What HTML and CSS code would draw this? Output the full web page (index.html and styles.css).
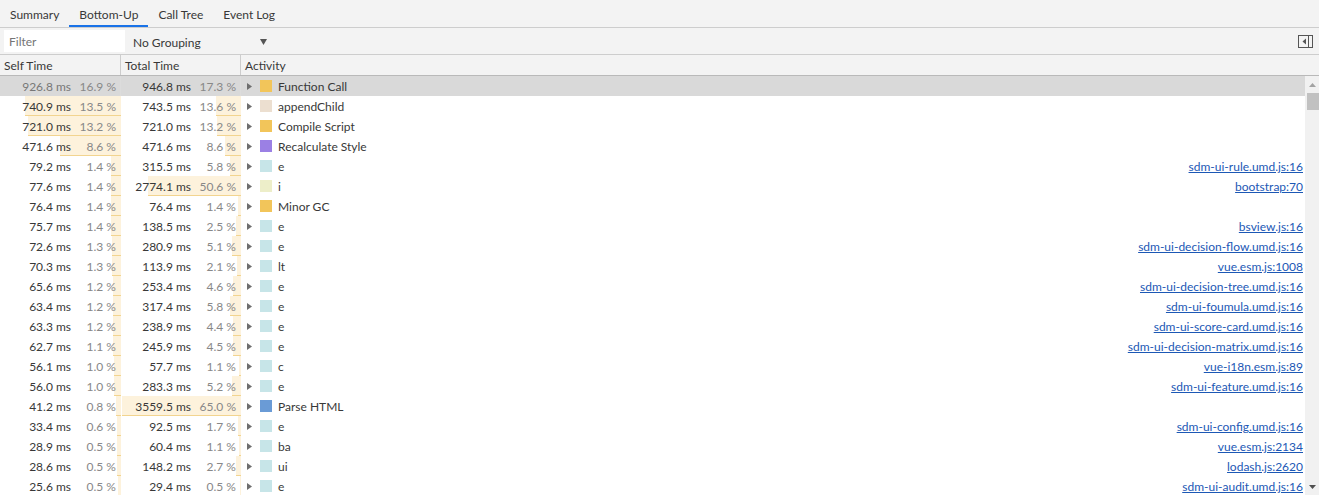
FILE: index.html
```html
<!DOCTYPE html>
<html>
<head>
<meta charset="utf-8">
<title>Bottom-Up</title>
<link rel="stylesheet" href="styles.css">
</head>
<body>
<div class="panel">
  <div class="tabs">
    <div class="tab">Summary</div>
    <div class="tab active">Bottom-Up</div>
    <div class="tab">Call Tree</div>
    <div class="tab">Event Log</div>
  </div>
  <div class="toolbar">
    <div class="filter">Filter</div>
    <div class="grouping">
      <span>No Grouping</span>
      <svg class="dd" width="7" height="6" viewBox="0 0 7 6"><polygon points="0,0 7,0 3.5,6" fill="#555"/></svg>
    </div>
    <div class="spacer"></div>
    <svg class="toggle" width="15" height="13" viewBox="0 0 15 13"><rect x="0.5" y="0.5" width="14" height="12" fill="none" stroke="#555"/><line x1="10.5" y1="0.5" x2="10.5" y2="12.5" stroke="#555"/><polygon points="8,3.5 4.5,6.5 8,9.5" fill="#555"/></svg>
  </div>
  <div class="grid-head">
    <div class="hcell">Self Time</div>
    <div class="hcell">Total Time</div>
    <div class="hcell last">Activity</div>
  </div>
  <div class="grid-body">
    <div class="rows">
      <div class="row selected">
        <div class="cell num dim"><div class="bar" style="width:100%"></div><span class="ms">926.8 ms</span><span class="pct">16.9 %</span></div>
        <div class="cell num"><div class="bar" style="width:26.6%"></div><span class="ms">946.8 ms</span><span class="pct">17.3 %</span></div>
        <div class="cell act"><svg class="exp" width="5" height="7" viewBox="0 0 5 7"><polygon points="0,0 5,3.5 0,7"/></svg><span class="sw c-script"></span><span class="name">Function Call</span></div>
      </div>
      <div class="row">
        <div class="cell num"><div class="bar" style="width:79.94%"></div><span class="ms">740.9 ms</span><span class="pct">13.5 %</span></div>
        <div class="cell num"><div class="bar" style="width:20.89%"></div><span class="ms">743.5 ms</span><span class="pct">13.6 %</span></div>
        <div class="cell act"><svg class="exp" width="5" height="7" viewBox="0 0 5 7"><polygon points="0,0 5,3.5 0,7"/></svg><span class="sw c-native"></span><span class="name">appendChild</span></div>
      </div>
      <div class="row">
        <div class="cell num"><div class="bar" style="width:77.79%"></div><span class="ms">721.0 ms</span><span class="pct">13.2 %</span></div>
        <div class="cell num"><div class="bar" style="width:20.26%"></div><span class="ms">721.0 ms</span><span class="pct">13.2 %</span></div>
        <div class="cell act"><svg class="exp" width="5" height="7" viewBox="0 0 5 7"><polygon points="0,0 5,3.5 0,7"/></svg><span class="sw c-script"></span><span class="name">Compile Script</span></div>
      </div>
      <div class="row">
        <div class="cell num"><div class="bar" style="width:50.88%"></div><span class="ms">471.6 ms</span><span class="pct">8.6 %</span></div>
        <div class="cell num"><div class="bar" style="width:13.25%"></div><span class="ms">471.6 ms</span><span class="pct">8.6 %</span></div>
        <div class="cell act"><svg class="exp" width="5" height="7" viewBox="0 0 5 7"><polygon points="0,0 5,3.5 0,7"/></svg><span class="sw c-render"></span><span class="name">Recalculate Style</span></div>
      </div>
      <div class="row">
        <div class="cell num"><div class="bar" style="width:8.55%"></div><span class="ms">79.2 ms</span><span class="pct">1.4 %</span></div>
        <div class="cell num"><div class="bar" style="width:8.86%"></div><span class="ms">315.5 ms</span><span class="pct">5.8 %</span></div>
        <div class="cell act"><svg class="exp" width="5" height="7" viewBox="0 0 5 7"><polygon points="0,0 5,3.5 0,7"/></svg><span class="sw c-fn"></span><span class="name">e</span><a class="link">sdm-ui-rule.umd.js:16</a></div>
      </div>
      <div class="row">
        <div class="cell num"><div class="bar" style="width:8.37%"></div><span class="ms">77.6 ms</span><span class="pct">1.4 %</span></div>
        <div class="cell num"><div class="bar" style="width:77.93%"></div><span class="ms">2774.1 ms</span><span class="pct">50.6 %</span></div>
        <div class="cell act"><svg class="exp" width="5" height="7" viewBox="0 0 5 7"><polygon points="0,0 5,3.5 0,7"/></svg><span class="sw c-fn2"></span><span class="name">i</span><a class="link">bootstrap:70</a></div>
      </div>
      <div class="row">
        <div class="cell num"><div class="bar" style="width:8.24%"></div><span class="ms">76.4 ms</span><span class="pct">1.4 %</span></div>
        <div class="cell num"><div class="bar" style="width:2.15%"></div><span class="ms">76.4 ms</span><span class="pct">1.4 %</span></div>
        <div class="cell act"><svg class="exp" width="5" height="7" viewBox="0 0 5 7"><polygon points="0,0 5,3.5 0,7"/></svg><span class="sw c-script"></span><span class="name">Minor GC</span></div>
      </div>
      <div class="row">
        <div class="cell num"><div class="bar" style="width:8.17%"></div><span class="ms">75.7 ms</span><span class="pct">1.4 %</span></div>
        <div class="cell num"><div class="bar" style="width:3.89%"></div><span class="ms">138.5 ms</span><span class="pct">2.5 %</span></div>
        <div class="cell act"><svg class="exp" width="5" height="7" viewBox="0 0 5 7"><polygon points="0,0 5,3.5 0,7"/></svg><span class="sw c-fn"></span><span class="name">e</span><a class="link">bsview.js:16</a></div>
      </div>
      <div class="row">
        <div class="cell num"><div class="bar" style="width:7.83%"></div><span class="ms">72.6 ms</span><span class="pct">1.3 %</span></div>
        <div class="cell num"><div class="bar" style="width:7.89%"></div><span class="ms">280.9 ms</span><span class="pct">5.1 %</span></div>
        <div class="cell act"><svg class="exp" width="5" height="7" viewBox="0 0 5 7"><polygon points="0,0 5,3.5 0,7"/></svg><span class="sw c-fn"></span><span class="name">e</span><a class="link">sdm-ui-decision-flow.umd.js:16</a></div>
      </div>
      <div class="row">
        <div class="cell num"><div class="bar" style="width:7.59%"></div><span class="ms">70.3 ms</span><span class="pct">1.3 %</span></div>
        <div class="cell num"><div class="bar" style="width:3.2%"></div><span class="ms">113.9 ms</span><span class="pct">2.1 %</span></div>
        <div class="cell act"><svg class="exp" width="5" height="7" viewBox="0 0 5 7"><polygon points="0,0 5,3.5 0,7"/></svg><span class="sw c-fn"></span><span class="name">lt</span><a class="link">vue.esm.js:1008</a></div>
      </div>
      <div class="row">
        <div class="cell num"><div class="bar" style="width:7.08%"></div><span class="ms">65.6 ms</span><span class="pct">1.2 %</span></div>
        <div class="cell num"><div class="bar" style="width:7.12%"></div><span class="ms">253.4 ms</span><span class="pct">4.6 %</span></div>
        <div class="cell act"><svg class="exp" width="5" height="7" viewBox="0 0 5 7"><polygon points="0,0 5,3.5 0,7"/></svg><span class="sw c-fn"></span><span class="name">e</span><a class="link">sdm-ui-decision-tree.umd.js:16</a></div>
      </div>
      <div class="row">
        <div class="cell num"><div class="bar" style="width:6.84%"></div><span class="ms">63.4 ms</span><span class="pct">1.2 %</span></div>
        <div class="cell num"><div class="bar" style="width:8.92%"></div><span class="ms">317.4 ms</span><span class="pct">5.8 %</span></div>
        <div class="cell act"><svg class="exp" width="5" height="7" viewBox="0 0 5 7"><polygon points="0,0 5,3.5 0,7"/></svg><span class="sw c-fn"></span><span class="name">e</span><a class="link">sdm-ui-foumula.umd.js:16</a></div>
      </div>
      <div class="row">
        <div class="cell num"><div class="bar" style="width:6.83%"></div><span class="ms">63.3 ms</span><span class="pct">1.2 %</span></div>
        <div class="cell num"><div class="bar" style="width:6.71%"></div><span class="ms">238.9 ms</span><span class="pct">4.4 %</span></div>
        <div class="cell act"><svg class="exp" width="5" height="7" viewBox="0 0 5 7"><polygon points="0,0 5,3.5 0,7"/></svg><span class="sw c-fn"></span><span class="name">e</span><a class="link">sdm-ui-score-card.umd.js:16</a></div>
      </div>
      <div class="row">
        <div class="cell num"><div class="bar" style="width:6.77%"></div><span class="ms">62.7 ms</span><span class="pct">1.1 %</span></div>
        <div class="cell num"><div class="bar" style="width:6.91%"></div><span class="ms">245.9 ms</span><span class="pct">4.5 %</span></div>
        <div class="cell act"><svg class="exp" width="5" height="7" viewBox="0 0 5 7"><polygon points="0,0 5,3.5 0,7"/></svg><span class="sw c-fn"></span><span class="name">e</span><a class="link">sdm-ui-decision-matrix.umd.js:16</a></div>
      </div>
      <div class="row">
        <div class="cell num"><div class="bar" style="width:6.05%"></div><span class="ms">56.1 ms</span><span class="pct">1.0 %</span></div>
        <div class="cell num"><div class="bar" style="width:1.62%"></div><span class="ms">57.7 ms</span><span class="pct">1.1 %</span></div>
        <div class="cell act"><svg class="exp" width="5" height="7" viewBox="0 0 5 7"><polygon points="0,0 5,3.5 0,7"/></svg><span class="sw c-fn"></span><span class="name">c</span><a class="link">vue-i18n.esm.js:89</a></div>
      </div>
      <div class="row">
        <div class="cell num"><div class="bar" style="width:6.04%"></div><span class="ms">56.0 ms</span><span class="pct">1.0 %</span></div>
        <div class="cell num"><div class="bar" style="width:7.96%"></div><span class="ms">283.3 ms</span><span class="pct">5.2 %</span></div>
        <div class="cell act"><svg class="exp" width="5" height="7" viewBox="0 0 5 7"><polygon points="0,0 5,3.5 0,7"/></svg><span class="sw c-fn"></span><span class="name">e</span><a class="link">sdm-ui-feature.umd.js:16</a></div>
      </div>
      <div class="row">
        <div class="cell num"><div class="bar" style="width:4.45%"></div><span class="ms">41.2 ms</span><span class="pct">0.8 %</span></div>
        <div class="cell num"><div class="bar" style="width:100%"></div><span class="ms">3559.5 ms</span><span class="pct">65.0 %</span></div>
        <div class="cell act"><svg class="exp" width="5" height="7" viewBox="0 0 5 7"><polygon points="0,0 5,3.5 0,7"/></svg><span class="sw c-load"></span><span class="name">Parse HTML</span></div>
      </div>
      <div class="row">
        <div class="cell num"><div class="bar" style="width:3.6%"></div><span class="ms">33.4 ms</span><span class="pct">0.6 %</span></div>
        <div class="cell num"><div class="bar" style="width:2.6%"></div><span class="ms">92.5 ms</span><span class="pct">1.7 %</span></div>
        <div class="cell act"><svg class="exp" width="5" height="7" viewBox="0 0 5 7"><polygon points="0,0 5,3.5 0,7"/></svg><span class="sw c-fn"></span><span class="name">e</span><a class="link">sdm-ui-config.umd.js:16</a></div>
      </div>
      <div class="row">
        <div class="cell num"><div class="bar" style="width:3.12%"></div><span class="ms">28.9 ms</span><span class="pct">0.5 %</span></div>
        <div class="cell num"><div class="bar" style="width:1.7%"></div><span class="ms">60.4 ms</span><span class="pct">1.1 %</span></div>
        <div class="cell act"><svg class="exp" width="5" height="7" viewBox="0 0 5 7"><polygon points="0,0 5,3.5 0,7"/></svg><span class="sw c-fn"></span><span class="name">ba</span><a class="link">vue.esm.js:2134</a></div>
      </div>
      <div class="row">
        <div class="cell num"><div class="bar" style="width:3.09%"></div><span class="ms">28.6 ms</span><span class="pct">0.5 %</span></div>
        <div class="cell num"><div class="bar" style="width:4.16%"></div><span class="ms">148.2 ms</span><span class="pct">2.7 %</span></div>
        <div class="cell act"><svg class="exp" width="5" height="7" viewBox="0 0 5 7"><polygon points="0,0 5,3.5 0,7"/></svg><span class="sw c-fn"></span><span class="name">ui</span><a class="link">lodash.js:2620</a></div>
      </div>
      <div class="row">
        <div class="cell num"><div class="bar" style="width:2.76%"></div><span class="ms">25.6 ms</span><span class="pct">0.5 %</span></div>
        <div class="cell num"><div class="bar" style="width:0.83%"></div><span class="ms">29.4 ms</span><span class="pct">0.5 %</span></div>
        <div class="cell act"><svg class="exp" width="5" height="7" viewBox="0 0 5 7"><polygon points="0,0 5,3.5 0,7"/></svg><span class="sw c-fn"></span><span class="name">e</span><a class="link">sdm-ui-audit.umd.js:16</a></div>
      </div>
    </div>
    <div class="scrollbar">
      <div class="sb-btn"><svg width="7" height="4" viewBox="0 0 7 4"><polygon points="0,4 7,4 3.5,0" fill="#a3a3a3"/></svg></div>
      <div class="sb-thumb"></div>
      <div class="sb-track"></div>
      <div class="sb-btn"><svg width="7" height="4" viewBox="0 0 7 4"><polygon points="0,0 7,0 3.5,4" fill="#505050"/></svg></div>
    </div>
  </div>
</div>
</body>
</html>
```

FILE: styles.css
```css
* { box-sizing: border-box; }
html, body { margin: 0; padding: 0; }
body {
  font-family: Lato, "Liberation Sans", sans-serif;
  font-size: 12px;
  color: #383838;
  background: #fff;
}
.panel {
  height: 495px;
  display: flex;
  flex-direction: column;
  overflow: hidden;
}
.tabs {
  display: flex;
  height: 28px;
  background: #f3f3f3;
  border-bottom: 1px solid #cdcdcd;
}
.tab {
  position: relative;
  display: flex;
  align-items: center;
  padding: 1px 10px 0;
  height: 27px;
  color: #383838;
}
.tab.active::after {
  content: "";
  position: absolute;
  left: 0;
  right: 0;
  bottom: 0;
  height: 2px;
  background: #1a73e8;
}
.toolbar {
  display: flex;
  align-items: center;
  height: 27px;
  background: #f3f3f3;
  border-bottom: 1px solid #cdcdcd;
  padding: 0 6px 0 4px;
}
.filter {
  width: 121px;
  height: 22px;
  background: #fff;
  color: #757575;
  padding: 2px 0 0 5px;
  line-height: 20px;
}
.grouping {
  display: flex;
  align-items: center;
  width: 134px;
  margin-left: 8px;
  padding-top: 2px;
  color: #383838;
}
.grouping .dd { margin-left: auto; margin-top: -1px; }
.spacer { flex: 1; }
.toggle { display: block; margin-right: 0; }
.grid-head {
  display: grid;
  grid-template-columns: 121px 120px 1fr;
  height: 21px;
  background: #f3f3f3;
  border-bottom: 1px solid #b9b9b9;
}
.hcell {
  padding: 2px 4px 0;
  line-height: 18px;
  border-right: 1px solid #cdcdcd;
  color: #383838;
}
.hcell.last { border-right: none; }
.grid-body {
  flex: 1;
  display: flex;
  min-height: 0;
}
.rows {
  flex: 1;
  overflow: hidden;
}
.row {
  display: grid;
  grid-template-columns: 121px 120px 1fr;
  height: 20px;
}
.row.selected { background: #d9d9d9; }
.cell {
  height: 20px;
  white-space: nowrap;
}
.num {
  position: relative;
  display: flex;
  justify-content: flex-end;
  padding: 2px 4px 0 0;
  line-height: 18px;
  border-right: 1px solid #dcdcdc;
}
.bar {
  position: absolute;
  right: -1px;
  top: 0;
  bottom: 0;
  background: #fdf2dc;
  border-bottom: 1px solid #f2d48f;
}
.row.selected .bar { background: transparent; border-bottom-color: transparent; }
.ms, .pct { position: relative; }
.pct {
  width: 45px;
  text-align: right;
  color: #888;
}
.dim .ms { color: #777; }
.act {
  display: flex;
  align-items: center;
  padding: 0 2px 0 6px;
}
.exp { fill: #6e6e6e; flex: none; }
.sw {
  width: 12px;
  height: 12px;
  margin-left: 8px;
  flex: none;
}
.c-script { background: #f2c55a; }
.c-native { background: #ecdfd0; }
.c-render { background: #9b80e4; }
.c-fn { background: #c7e5e8; }
.c-fn2 { background: #edeec9; }
.c-load { background: #6a9bd6; }
.name {
  margin-left: 6px;
  padding-top: 2px;
  line-height: 18px;
  color: #383838;
}
.link {
  margin-left: auto;
  padding-top: 2px;
  line-height: 18px;
  color: #1c58b5;
  text-decoration: underline;
  cursor: pointer;
}
.scrollbar {
  width: 14px;
  background: #f1f1f1;
  display: flex;
  flex-direction: column;
}
.sb-btn {
  height: 17px;
  display: flex;
  align-items: center;
  justify-content: center;
}
.sb-thumb {
  height: 17px;
  margin: 0 0 0 2px;
  background: #c1c1c1;
}
.sb-track { flex: 1; }
```
